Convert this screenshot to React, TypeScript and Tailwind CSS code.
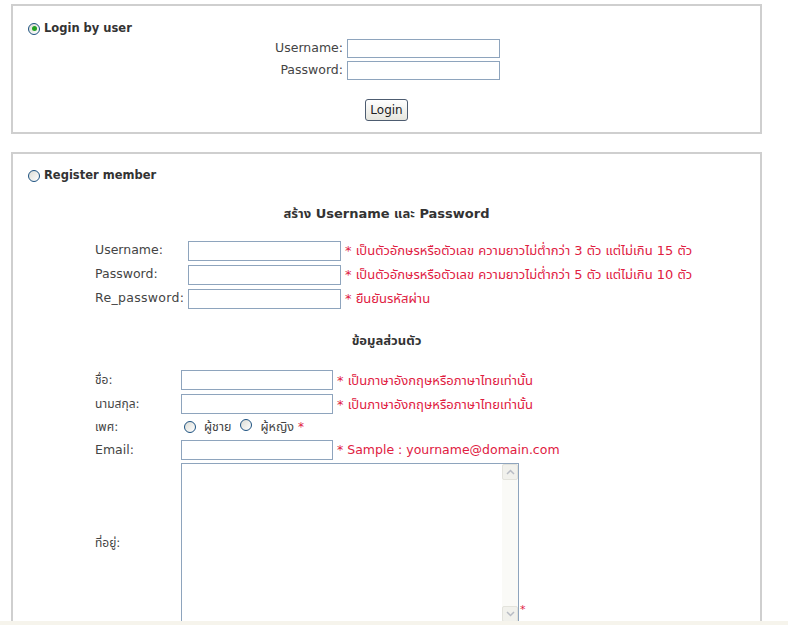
import React from "react";

const font = { fontFamily: '"DejaVu Sans", Tahoma, "Noto Sans Thai", "Noto Sans", sans-serif' };

function Radio({ checked = false }: { checked?: boolean }) {
  return (
    <span className="relative inline-flex h-[12px] w-[12px] shrink-0 items-center justify-center rounded-full border border-[#1c5180] bg-gradient-to-br from-[#dcdcd5] to-white">
      {checked && <span className="h-[5px] w-[5px] rounded-full bg-[#21a121]" />}
    </span>
  );
}

function Field({ w = "w-[153px]", h = "h-[20px]" }: { w?: string; h?: string }) {
  return <div className={`${w} ${h} border border-[#8ea4bd] bg-white`} />;
}

function Note({ children }: { children: React.ReactNode }) {
  return <span className="ml-[4px] text-[13px] text-[#e0203f]">{children}</span>;
}

function Chevron({ up }: { up?: boolean }) {
  return (
    <svg width="9" height="6" viewBox="0 0 9 6">
      <path d={up ? "M1 5 L4.5 1.5 L8 5" : "M1 1 L4.5 4.5 L8 1"} fill="none" stroke="#b8bcc4" strokeWidth="1.5" />
    </svg>
  );
}

export default function App() {
  return (
    <div className="bg-white text-[#444]" style={font}>
      <div className="h-[621px] overflow-hidden pt-[4px] pl-[11px]">
        {/* Login box */}
        <div className="w-[751px] h-[130px] border-2 border-[#cfcfcf] px-[15px] pt-[14px]">
          <div className="flex items-center gap-[4px] text-[11.5px] font-bold text-[#333]">
            <Radio checked />
            <span>Login by user</span>
          </div>
          <div className="flex flex-col items-center text-[12.5px]">
            <div className="flex h-[22px] items-center gap-[4px]">
              <span className="w-[70px] text-right">Username:</span>
              <Field h="h-[19px]" />
            </div>
            <div className="flex h-[22px] items-center gap-[4px]">
              <span className="w-[70px] text-right">Password:</span>
              <Field h="h-[19px]" />
            </div>
            <button className="mt-[18px] h-[22px] rounded-[3px] border border-[#4d5c70] bg-gradient-to-b from-white to-[#e6e6de] px-[4px] text-[12px] text-[#222]">
              Login
            </button>
          </div>
        </div>

        {/* Register box */}
        <div className="mt-[18px] w-[751px] h-[600px] border-2 border-[#cfcfcf] px-[15px] pt-[13px]">
          <div className="flex items-center gap-[4px] text-[11.5px] font-bold text-[#333]">
            <Radio />
            <span>Register member</span>
          </div>

          <div className="mt-[20px] text-center text-[13px] font-bold text-[#333]">
            สร้าง Username และ Password
          </div>

          <div className="mt-[15px] flex flex-col pl-[67px] text-[12.5px]">
            <div className="flex h-[24px] items-center">
              <span className="w-[93px]">Username:</span>
              <Field />
              <Note>* เป็นตัวอักษรหรือตัวเลข ความยาวไม่ต่ำกว่า 3 ตัว แต่ไม่เกิน 15 ตัว</Note>
            </div>
            <div className="flex h-[24px] items-center">
              <span className="w-[93px]">Password:</span>
              <Field />
              <Note>* เป็นตัวอักษรหรือตัวเลข ความยาวไม่ต่ำกว่า 5 ตัว แต่ไม่เกิน 10 ตัว</Note>
            </div>
            <div className="flex h-[24px] items-center">
              <span className="w-[93px] tracking-[0.3px]">Re_password:</span>
              <Field />
              <Note>* ยืนยันรหัสผ่าน</Note>
            </div>
          </div>

          <div className="mt-[20px] text-center text-[13px] font-bold text-[#333]">ข้อมูลส่วนตัว</div>

          <div className="mt-[18px] flex flex-col pl-[67px] text-[12.5px]">
            <div className="flex h-[24px] items-center">
              <span className="w-[86px] text-[12px]">ชื่อ:</span>
              <Field w="w-[152px]" />
              <Note>* เป็นภาษาอังกฤษหรือภาษาไทยเท่านั้น</Note>
            </div>
            <div className="flex h-[24px] items-center">
              <span className="w-[86px] text-[12px]">นามสกุล:</span>
              <Field w="w-[152px]" />
              <Note>* เป็นภาษาอังกฤษหรือภาษาไทยเท่านั้น</Note>
            </div>
            <div className="flex h-[22px] items-center">
              <span className="w-[89px] text-[12px]">เพศ:</span>
              <Radio />
              <span className="ml-[8px] text-[12.5px]">ผู้ชาย</span>
              <span className="ml-[9px]">
                <Radio />
              </span>
              <span className="ml-[8px] text-[12.5px]">ผู้หญิง</span>
              <span className="ml-[4px] text-[12px] text-[#e0203f]">*</span>
            </div>
            <div className="flex h-[24px] items-center">
              <span className="w-[86px]">Email:</span>
              <Field w="w-[152px]" />
              <span className="ml-[4px] text-[12.5px] text-[#e0203f]">* Sample : yourname@domain.com</span>
            </div>
            <div className="mt-[1px] flex items-end">
              <span className="w-[86px] self-center text-[12px]">ที่อยู่:</span>
              <div className="flex h-[160px] w-[338px] justify-end border border-[#8ea4bd] bg-white">
                <div className="flex w-[16px] flex-col justify-between bg-[#fafaf7]">
                  <div className="flex h-[16px] items-center justify-center rounded-[2px] border border-[#e3e3dc] bg-[#f1f1ec]">
                    <Chevron up />
                  </div>
                  <div className="flex h-[16px] items-center justify-center rounded-[2px] border border-[#e3e3dc] bg-[#f1f1ec]">
                    <Chevron />
                  </div>
                </div>
              </div>
              <span className="mb-[8px] ml-[1px] text-[11px] leading-none text-[#e0203f]">*</span>
            </div>
          </div>
        </div>
      </div>
      <div className="h-[10px] bg-[#f6f4ec]" />
    </div>
  );
}
